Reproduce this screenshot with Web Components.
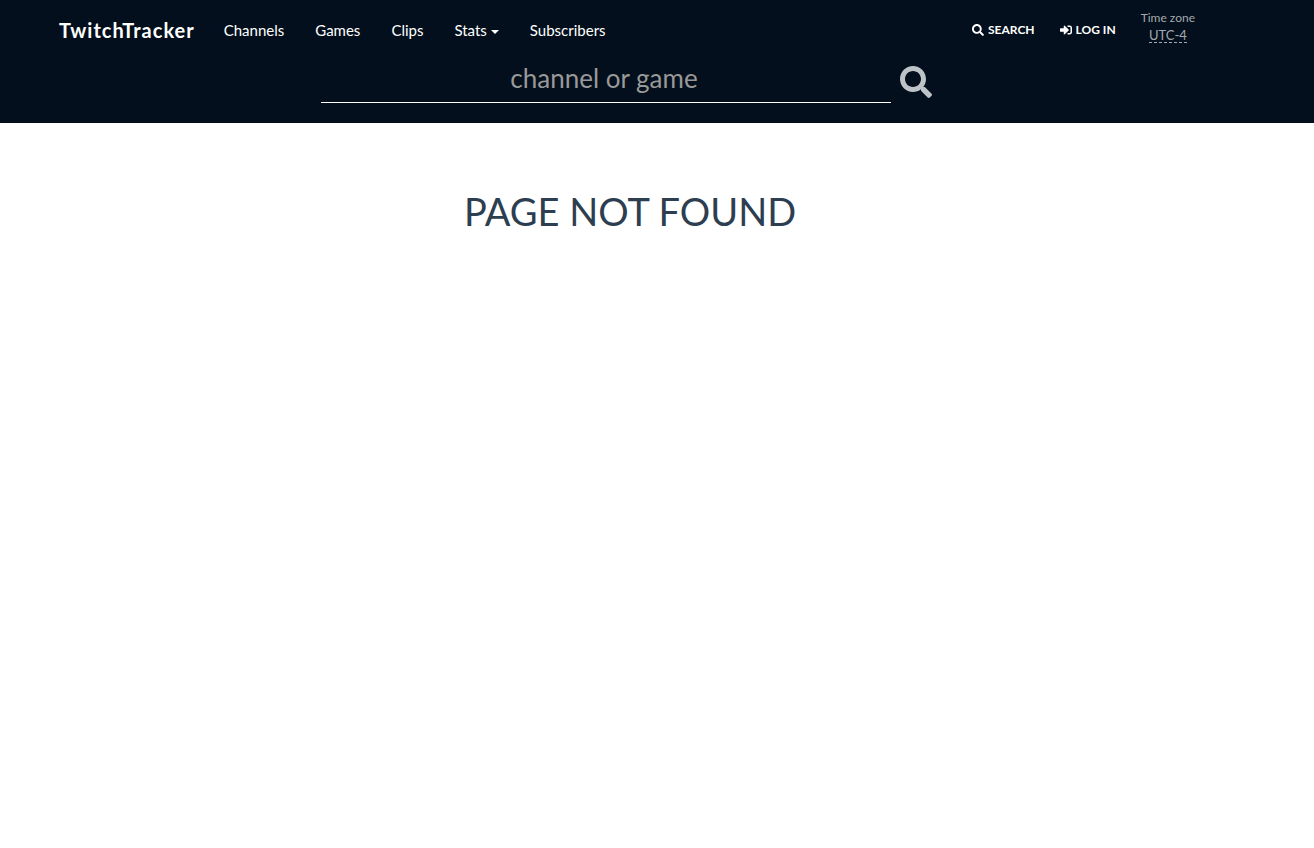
<!DOCTYPE html>
<html lang="en">
<head>
<meta charset="utf-8">
<meta name="viewport" content="width=device-width, initial-scale=1">
<title>TwitchTracker</title>
<style>
  body { margin: 0; background: #fff; color: #2c3e50; font: 15px/24px Lato, "Liberation Sans", sans-serif; }
</style>
</head>
<body>
<tt-header>
  <tt-navbar>
    <tt-nav-link>Channels</tt-nav-link>
    <tt-nav-link>Games</tt-nav-link>
    <tt-nav-link>Clips</tt-nav-link>
    <tt-nav-link caret>Stats</tt-nav-link>
    <tt-nav-link>Subscribers</tt-nav-link>
    <tt-action slot="actions" icon="search">SEARCH</tt-action>
    <tt-action slot="actions" icon="login">LOG IN</tt-action>
    <tt-timezone slot="actions">UTC-4</tt-timezone>
  </tt-navbar>
  <tt-search></tt-search>
</tt-header>
<tt-message>PAGE NOT FOUND</tt-message>

<script>
const ICONS = {
  search: '<path d="M505 442.700L405.300 343c-4.500-4.500-10.600-7-17-7H372c27.600-35.300 44-79.700 44-128C416 93.100 322.900 0 208 0S0 93.100 0 208s93.100 208 208 208c48.300 0 92.700-16.400 128-44v16.300c0 6.400 2.500 12.500 7 17l99.700 99.700c9.400 9.400 24.600 9.400 33.900 0l28.300-28.300c9.400-9.400 9.400-24.600.1-34zM208 336c-70.700 0-128-57.200-128-128 0-70.700 57.200-128 128-128 70.700 0 128 57.200 128 128 0 70.700-57.200 128-128 128z"/>',
  login: '<path d="M416 448h-84c-6.600 0-12-5.400-12-12v-40c0-6.600 5.400-12 12-12h84c17.700 0 32-14.300 32-32V160c0-17.700-14.300-32-32-32h-84c-6.600 0-12-5.400-12-12V76c0-6.600 5.400-12 12-12h84c53 0 96 43 96 96v192c0 53-43 96-96 96zm-47-209L201 71c-15-15-41-4.500-41 17v96H24c-13.300 0-24 10.700-24 24v96c0 13.300 10.700 24 24 24h136v96c0 21.500 26 32 41 17l168-168c9.300-9.400 9.300-24.600 0-34z"/>'
};
const icon = name => `<svg viewBox="0 0 512 512" fill="currentColor" aria-hidden="true">${ICONS[name]}</svg>`;

class Base extends HTMLElement {
  constructor() {
    super();
    this.attachShadow({ mode: 'open' }).innerHTML = this.template();
  }
}

customElements.define('tt-header', class extends Base {
  template() {
    return `<style>
      :host { display: block; background: #030f1c; color: #fff; padding: 0 54px 20px 0; }
    </style><header><slot></slot></header>`;
  }
});

customElements.define('tt-navbar', class extends Base {
  template() {
    return `<style>
      :host { display: block; }
      nav { display: flex; align-items: flex-start; max-width: 1142px; margin: 0 auto; height: 60px; }
      .brand { color: #fff; font-size: 20px; font-weight: 700; letter-spacing: 1px; line-height: 60px; text-decoration: none; margin-right: 14px; }
      .links { display: flex; flex: 1; gap: 1px; }
      .actions { display: flex; gap: 25px; padding-right: 6px; }
    </style>
    <nav><a class="brand" href="#">TwitchTracker</a>
      <div class="links"><slot></slot></div>
      <div class="actions"><slot name="actions"></slot></div></nav>`;
  }
});

customElements.define('tt-nav-link', class extends Base {
  template() {
    return `<style>
      :host { display: block; }
      a { display: flex; align-items: center; padding: 0 15px; color: #fff; text-decoration: none; line-height: 60px; }
      i { display: none; margin: 3px 0 0 4px; border: 4px solid transparent; border-top-color: currentColor; border-bottom: 0; }
      :host([caret]) i { display: block; }
    </style><a href="#"><slot></slot><i></i></a>`;
  }
});

customElements.define('tt-action', class extends Base {
  template() {
    return `<style>
      :host { display: block; }
      a { display: flex; align-items: center; gap: 4px; color: #fff; font-size: 12px; font-weight: 700; line-height: 60px; text-decoration: none; }
      .icon { display: flex; }
      svg { width: 12px; height: 12px; }
    </style><a href="#"><span class="icon"></span><slot></slot></a>`;
  }
  connectedCallback() {
    this.shadowRoot.querySelector('.icon').innerHTML = icon(this.getAttribute('icon'));
  }
});

customElements.define('tt-timezone', class extends Base {
  template() {
    return `<style>
      :host { display: flex; flex-direction: column; align-items: center; gap: 2px; padding-top: 9px; color: #a5a9ad; font-size: 12px; line-height: 17px; }
      button { all: unset; cursor: pointer; font-size: 13px; line-height: 14px; border-bottom: 1px dashed currentColor; }
    </style><span>Time zone</span><button type="button"><slot></slot></button>`;
  }
});

customElements.define('tt-search', class extends Base {
  template() {
    return `<style>
      :host { display: block; }
      form { display: flex; max-width: 618px; margin: 0 auto; }
      input { flex: 1; min-width: 0; box-sizing: border-box; height: 43px; margin: 0; padding: 0 4px 6px 0; border: 0; border-bottom: 1px solid #fff; outline: 0; background: transparent; color: #fff; font: 26px Lato, "Liberation Sans", sans-serif; text-align: center; }
      input::placeholder { color: #999; opacity: 1; }
      button { display: flex; align-items: center; justify-content: flex-end; width: 48px; height: 43px; margin: 0; padding: 0 7px 0 0; border: 0; background: none; color: #bdc3c7; cursor: pointer; }
      svg { width: 32px; height: 32px; }
    </style>
    <form role="search" onsubmit="return false"><input type="text" aria-label="Channel or game" placeholder="channel or game"><button type="submit" aria-label="Search">${icon('search')}</button></form>`;
  }
});

customElements.define('tt-message', class extends Base {
  template() {
    return `<style>
      :host { display: block; padding: 66px 54px 66px 0; }
      h1 { margin: 0; font-size: 38px; font-weight: 400; line-height: 44px; text-align: center; }
    </style><main><h1><slot></slot></h1></main>`;
  }
});
</script>
</body>
</html>
